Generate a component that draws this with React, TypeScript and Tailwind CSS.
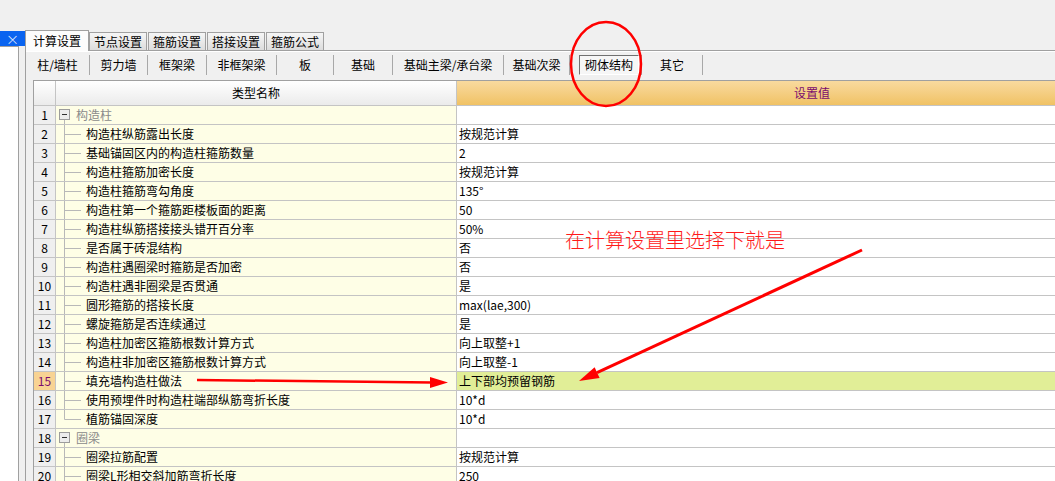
import React from "react";

type Row = {
  n: number;
  name: string;
  value: string;
  kind: "group" | "child" | "last";
  selected?: boolean;
};

const rows: Row[] = [
  { n: 1, name: "构造柱", value: "", kind: "group" },
  { n: 2, name: "构造柱纵筋露出长度", value: "按规范计算", kind: "child" },
  { n: 3, name: "基础锚固区内的构造柱箍筋数量", value: "2", kind: "child" },
  { n: 4, name: "构造柱箍筋加密长度", value: "按规范计算", kind: "child" },
  { n: 5, name: "构造柱箍筋弯勾角度", value: "135°", kind: "child" },
  { n: 6, name: "构造柱第一个箍筋距楼板面的距离", value: "50", kind: "child" },
  { n: 7, name: "构造柱纵筋搭接接头错开百分率", value: "50%", kind: "child" },
  { n: 8, name: "是否属于砖混结构", value: "否", kind: "child" },
  { n: 9, name: "构造柱遇圈梁时箍筋是否加密", value: "否", kind: "child" },
  { n: 10, name: "构造柱遇非圈梁是否贯通", value: "是", kind: "child" },
  { n: 11, name: "圆形箍筋的搭接长度", value: "max(lae,300)", kind: "child" },
  { n: 12, name: "螺旋箍筋是否连续通过", value: "是", kind: "child" },
  { n: 13, name: "构造柱加密区箍筋根数计算方式", value: "向上取整+1", kind: "child" },
  { n: 14, name: "构造柱非加密区箍筋根数计算方式", value: "向上取整-1", kind: "child" },
  { n: 15, name: "填充墙构造柱做法", value: "上下部均预留钢筋", kind: "child", selected: true },
  { n: 16, name: "使用预埋件时构造柱端部纵筋弯折长度", value: "10*d", kind: "child" },
  { n: 17, name: "植筋锚固深度", value: "10*d", kind: "last" },
  { n: 18, name: "圈梁", value: "", kind: "group" },
  { n: 19, name: "圈梁拉筋配置", value: "按规范计算", kind: "child" },
  { n: 20, name: "圈梁L形相交斜加筋弯折长度", value: "250", kind: "child" },
];

const subTabs = [
  { label: "柱/墙柱", w: "w-[64px]" },
  { label: "剪力墙", w: "w-[58px]" },
  { label: "框架梁", w: "w-[59px]" },
  { label: "非框架梁", w: "w-[70px]" },
  { label: "板", w: "w-[57px]" },
  { label: "基础", w: "w-[59px]" },
  { label: "基础主梁/承台梁", w: "w-[111px]" },
  { label: "基础次梁", w: "w-[66px]" },
  { label: "砌体结构", w: "w-[72px]", pressed: true },
  { label: "其它", w: "w-[61px]" },
];

function TreeIcon({ kind }: { kind: Row["kind"] }) {
  if (kind === "group") {
    return (
      <svg width="20" height="18" className="shrink-0">
        <line x1="8.5" y1="14" x2="8.5" y2="18" stroke="#b8b8b8" />
        <rect x="3.5" y="3.5" width="10" height="10" fill="#ececec" stroke="#9c9c9c" />
        <rect x="6" y="8" width="5" height="1" fill="#303030" />
      </svg>
    );
  }
  return (
    <svg width="30" height="18" className="shrink-0">
      <line x1="8.5" y1="0" x2="8.5" y2={kind === "last" ? 9.5 : 18} stroke="#b8b8b8" />
      <line x1="8.5" y1="9.5" x2="25" y2="9.5" stroke="#b8b8b8" />
    </svg>
  );
}

export default function App() {
  return (
    <div className="relative w-[1055px] h-[481px] overflow-hidden bg-[#f0f0f0] font-['Noto_Sans_CJK_SC',sans-serif] text-[12px] text-black flex flex-col">
      <div className="h-[30px] shrink-0" />
      <div className="flex flex-1 min-h-0">
        {/* left docked panel */}
        <div className="w-[25px] shrink-0 flex flex-col">
          <div className="mt-px h-[15px] bg-[#0a64f0] text-white flex items-center justify-center text-[13px] leading-none font-light">
            ×
          </div>
          <div className="flex-1 w-[19px] bg-white border-t border-r border-[#a0a0a0]" />
        </div>

        <div className="flex-1 flex flex-col min-w-0">
          {/* main tabs */}
          <div className="h-[20px] flex items-end shrink-0">
            <div className="relative z-10 -mb-px h-[21px] w-[64px] border border-b-0 border-[#a0a0a0] bg-[#fcfcfc] flex items-center justify-center leading-none">
              计算设置
            </div>
            {["节点设置", "箍筋设置", "搭接设置", "箍筋公式"].map((t, i) => (
              <div
                key={t}
                className={`h-[18px] w-[58px] border border-b-0 border-[#a0a0a0] bg-linear-to-b from-[#f6f6f6] to-[#dcdcdc] flex items-center justify-center leading-none ${i > 0 ? "ml-px" : ""}`}
              >
                {t}
              </div>
            ))}
          </div>

          <div className="flex-1 border-l border-t border-[#a0a0a0] flex flex-col min-h-0">
            {/* sub tabs */}
            <div className="h-[29px] shrink-0 flex items-start pt-[3px] border-t border-white">
              {subTabs.map((s) => (
                <div key={s.label} className={`${s.w} h-[20px] shrink-0 border-r border-[#a8a8a8] flex items-center leading-none`}>
                  {s.pressed ? (
                    <div className="ml-[9px] w-[60px] h-[20px] border border-t-[#707070] border-l-[#707070] border-b-white border-r-white bg-[#f6f6f6] flex items-center justify-center">
                      {s.label}
                    </div>
                  ) : (
                    <div className="w-full text-center">{s.label}</div>
                  )}
                </div>
              ))}
            </div>

            {/* table */}
            <div className="pl-[7px] flex-1 min-h-0">
              <div className="border-l border-t border-[#a0a0a0] bg-white">
                <div className="flex h-[25px] border-b border-[#c4c4c4]">
                  <div className="w-[22px] shrink-0 border-r border-[#c4c4c4] bg-linear-to-b from-white to-[#ebebeb]" />
                  <div className="w-[401px] shrink-0 border-r border-[#c4c4c4] bg-linear-to-b from-white to-[#ebebeb] flex items-center justify-center">
                    类型名称
                  </div>
                  <div className="w-[710px] shrink-0 bg-linear-to-b from-[#f9da9e] to-[#f0c264] flex items-center justify-center text-[#7a0a6e]">
                    设置值
                  </div>
                </div>
                {rows.map((r) => (
                  <div key={r.n} className="flex h-[19px] border-b border-[#c4c4c4] leading-[18px]">
                    <div
                      className={`w-[22px] shrink-0 border-r border-[#c4c4c4] text-center ${
                        r.selected ? "bg-[#f8d393] text-[#7a0a6e]" : "bg-[#efefef]"
                      }`}
                    >
                      {r.n}
                    </div>
                    <div className="w-[401px] shrink-0 border-r border-[#c4c4c4] bg-[#fefee6] flex items-center whitespace-nowrap overflow-hidden">
                      <TreeIcon kind={r.kind} />
                      <span className={r.kind === "group" ? "text-[#8a8a8a]" : ""}>{r.name}</span>
                    </div>
                    <div className={`w-[710px] shrink-0 pl-[2px] whitespace-nowrap ${r.selected ? "bg-[#e1ee97]" : "bg-white"}`}>
                      {r.value}
                    </div>
                  </div>
                ))}
              </div>
            </div>
          </div>
        </div>
      </div>

      {/* red annotations */}
      <div className="absolute left-[565px] top-[230px] text-[20px] leading-none font-light text-[#ff1a1a] whitespace-nowrap">
        在计算设置里选择下就是
      </div>
      <svg className="absolute inset-0 pointer-events-none" width="1055" height="481">
        <ellipse cx="606" cy="64" rx="35" ry="42" fill="none" stroke="#ff0000" strokeWidth="2.5" />
        <line x1="862" y1="250" x2="597" y2="372.6" stroke="#ff0000" strokeWidth="3" />
        <polygon points="579,381 599.6,378 594.6,367.2" fill="#ff0000" />
        <line x1="197" y1="380" x2="432" y2="382.5" stroke="#ff0000" strokeWidth="2.5" />
        <polygon points="448,382.5 430,377 430,388" fill="#ff0000" />
      </svg>
    </div>
  );
}
